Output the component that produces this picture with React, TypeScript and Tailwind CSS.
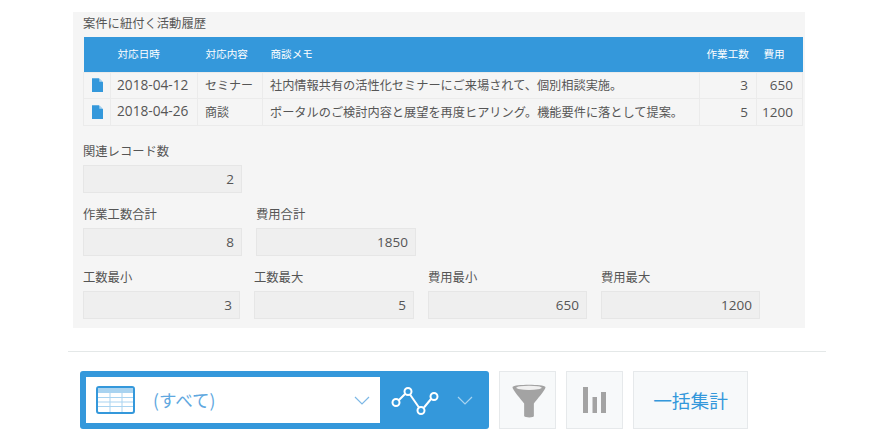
const rows = [
  {
    date: "2018-04-12",
    type: "セミナー",
    memo: "社内情報共有の活性化セミナーにご来場されて、個別相談実施。",
    hours: 3,
    cost: 650,
  },
  {
    date: "2018-04-26",
    type: "商談",
    memo: "ポータルのご検討内容と展望を再度ヒアリング。機能要件に落として提案。",
    hours: 5,
    cost: 1200,
  },
];

const FileIcon = () => (
  <svg width="11" height="14" viewBox="0 0 12 15" className="block mx-auto">
    <path d="M0 0H7.5L12 4.5V15H0Z" fill="#3498db" />
    <path d="M8 0.5L11.5 4H8Z" fill="#a9d3f0" />
  </svg>
);

const Field = ({ label, value, width }: { label: string; value: number; width: string }) => (
  <div className={width}>
    <div className="h-[14px] whitespace-nowrap text-[12.3px] leading-[14px] text-[#555]">{label}</div>
    <div className="mt-[7px] h-[28px] border border-[#e6e6e6] bg-[#efefef] pr-[7px] text-right text-[13.5px] leading-[26px] text-[#555] font-['Open_Sans','Noto_Sans_CJK_JP',sans-serif]">
      {value}
    </div>
  </div>
);

const TableIcon = () => (
  <svg width="39" height="28" viewBox="0 0 39 28">
    <rect x="1" y="1" width="37" height="26" rx="2" fill="#fff" stroke="#3498db" strokeWidth="2" />
    <rect x="2" y="2" width="35" height="5" fill="#a9d3f0" />
    <path d="M2 11.5H37M2 16H37M2 20.5H37M14 7V26M26 7V26" stroke="#a9d3f0" strokeWidth="1" fill="none" />
  </svg>
);

const GraphIcon = () => (
  <svg width="50" height="32" viewBox="0 0 50 32" fill="none" stroke="#fff" strokeWidth="2">
    <path d="M8 16L14 10M19 10.5L28 23.5M33 23.5L40 15" />
    <circle cx="5" cy="18.5" r="3.5" />
    <circle cx="17" cy="7.5" r="3.5" />
    <circle cx="30" cy="26.5" r="3.5" />
    <circle cx="43" cy="12.5" r="3.5" />
  </svg>
);

const Chevron = ({ color }: { color: string }) => (
  <svg width="16" height="9" viewBox="0 0 16 9" fill="none" stroke={color} strokeWidth="1.2">
    <path d="M1 1L8 8L15 1" />
  </svg>
);

export default function App() {
  return (
    <div className="h-[442px] w-[886px] overflow-hidden bg-white font-['Noto_Sans_CJK_JP',sans-serif] text-[#555]">
      <div className="h-[12px]" />
      <section className="ml-[73px] h-[316px] w-[732px] bg-[#f5f5f5] pl-[10px]">
        <div className="h-[25px] text-[12.3px] leading-[23px] text-[#555]">案件に紐付く活動履歴</div>
        <table className="w-[719px] table-fixed border-collapse">
          <colgroup>
            <col className="w-[27px]" />
            <col className="w-[87px]" />
            <col className="w-[65px]" />
            <col className="w-[437px]" />
            <col className="w-[57px]" />
            <col className="w-[46px]" />
          </colgroup>
          <thead>
            <tr className="h-[35px] bg-[#3498db] text-left text-[10.6px] font-normal text-white">
              <th />
              <th className="pl-[7px] font-normal">対応日時</th>
              <th className="pl-[8px] font-normal">対応内容</th>
              <th className="pl-[8px] font-normal">商談メモ</th>
              <th className="pl-[7px] font-normal whitespace-nowrap">作業工数</th>
              <th className="pl-[7px] font-normal">費用</th>
            </tr>
          </thead>
          <tbody className="text-[12px]">
            {rows.map((row) => (
              <tr key={row.date} className="h-[26.5px]">
                <td className="border border-[#ebebeb]">
                  <FileIcon />
                </td>
                <td className="border border-[#ebebeb] pl-[6px] text-[13.7px] font-['Open_Sans',sans-serif]">
                  {row.date}
                </td>
                <td className="border border-[#ebebeb] pl-[7px] whitespace-nowrap">{row.type}</td>
                <td className="border border-[#ebebeb] pl-[7px] whitespace-nowrap text-[12.2px]">{row.memo}</td>
                <td className="border border-[#ebebeb] pr-[8px] text-right text-[13.5px] font-['Open_Sans',sans-serif]">
                  {row.hours}
                </td>
                <td className="border border-[#ebebeb] pr-[9px] text-right text-[13.5px] font-['Open_Sans',sans-serif]">
                  {row.cost}
                </td>
              </tr>
            ))}
          </tbody>
        </table>
        <div className="mt-[18px] flex">
          <Field label="関連レコード数" value={2} width="w-[159px]" />
        </div>
        <div className="mt-[14px] flex gap-[14px]">
          <Field label="作業工数合計" value={8} width="w-[159px]" />
          <Field label="費用合計" value={1850} width="w-[160px]" />
        </div>
        <div className="mt-[14px] flex gap-[14px]">
          <Field label="工数最小" value={3} width="w-[157px]" />
          <Field label="工数最大" value={5} width="w-[160px]" />
          <Field label="費用最小" value={650} width="w-[159px]" />
          <Field label="費用最大" value={1200} width="w-[159px]" />
        </div>
      </section>
      <div className="ml-[68px] mt-[23px] h-px w-[758px] bg-[#e4e8e8]" />
      <div className="ml-[80px] mt-[19px] flex h-[58px] items-stretch">
        <div className="flex w-[409px] rounded-[3px] bg-[#3498db] p-[6px] pr-0">
          <div className="flex w-[294px] items-center bg-white pl-[10px] pr-[10px]">
            <TableIcon />
            <span className="ml-[18px] flex-1 text-[17.5px] text-[#5fa8e0]">(すべて)</span>
            <Chevron color="#7db8e6" />
          </div>
          <div className="flex flex-1 items-center pl-[11px]">
            <GraphIcon />
            <span className="ml-[16px]">
              <Chevron color="#a9d3f0" />
            </span>
          </div>
        </div>
        <button className="ml-[10px] flex w-[57px] items-center justify-center border border-[#e6e9eb] bg-[#f7f9fa] pl-[2px]">
          <svg width="36" height="35" viewBox="0 0 36 36">
            <path d="M1 4C3 1 33 1 35 4C35 7 26 17 23 21V34C23 36 14 36 13 34V21C10 17 1 7 1 4Z" fill="#a3a3a3" />
            <ellipse cx="18" cy="5" rx="13" ry="2.2" fill="#f0f0f0" />
          </svg>
        </button>
        <button className="ml-[10px] flex w-[57px] items-center justify-center border border-[#e6e9eb] bg-[#f7f9fa]">
          <svg width="23" height="26" viewBox="0 0 23 26" fill="#a3a3a3">
            <rect x="0" y="0" width="5" height="26" />
            <rect x="9.5" y="10" width="4.5" height="16" />
            <rect x="18" y="5" width="5" height="21" />
          </svg>
        </button>
        <button className="ml-[10px] w-[115px] border border-[#e6e9eb] bg-[#f7f9fa] text-[18.7px] text-[#3498db]">
          一括集計
        </button>
      </div>
    </div>
  );
}
